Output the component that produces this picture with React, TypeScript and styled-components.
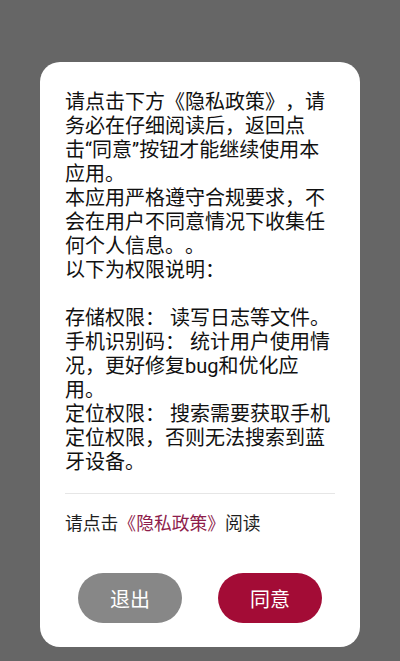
import React from "react";
import styled, { createGlobalStyle } from "styled-components";

const Global = createGlobalStyle`
  html, body { margin: 0; padding: 0; background: #666666; }
  body { font-family: Roboto, "Noto Sans CJK SC", sans-serif; }
`;

const Screen = styled.div`
  width: 400px;
  height: 661px;
  background: #666666;
  display: flex;
  justify-content: center;
  align-items: flex-start;
  padding-top: 62px;
  box-sizing: border-box;
`;

const Card = styled.div`
  width: 320px;
  height: 585px;
  background: #ffffff;
  border-radius: 20px;
  padding: 28px 25px 24px;
  box-sizing: border-box;
  display: flex;
  flex-direction: column;
  text-spacing-trim: space-all;
`;

const Body = styled.div`
  font-size: 20px;
  line-height: 24px;
  color: #111111;
  white-space: pre-wrap;
  text-spacing-trim: space-all;
`;

const Divider = styled.div`
  height: 1px;
  background: #e6e6e6;
  margin-top: 19px;
`;

const Footer = styled.div`
  margin-top: 18px;
  font-size: 17.8px;
  line-height: 24px;
  color: #1e1e1e;
  text-spacing-trim: space-all;
`;

const Link = styled.span`
  color: #8e1d4b;
`;

const Actions = styled.div`
  margin-top: 37px;
  display: flex;
  justify-content: space-between;
  padding: 0 13px;
`;

const Button = styled.button<{ $primary?: boolean }>`
  width: 104px;
  height: 50px;
  border: none;
  border-radius: 25px;
  background: ${(p) => (p.$primary ? "#a30c36" : "#878787")};
  color: #ffffff;
  font-family: Roboto, "Noto Sans CJK SC", sans-serif;
  font-size: 20px;
  padding: 0;
`;

const text = `请点击下方《隐私政策》，请务必在仔细阅读后，返回点击\u2060“\u2060同意”按钮才能继续使用本应用。
本应用严格遵守合规要求，不会在用户不同意情况下收集任何个人信息。。
以下为权限说明：

存储权限： 读写日志等文件。
手机识别码： 统计用户使用情况，更好修复bug和优化应用。
定位权限： 搜索需要获取手机定位权限，否则无法搜索到蓝牙设备。`;

export default function App() {
  return (
    <>
      <Global />
      <Screen lang="zh-CN">
        <Card>
          <Body>{text}</Body>
          <Divider />
          <Footer>
            请点击<Link>《隐私政策》</Link>阅读
          </Footer>
          <Actions>
            <Button>退出</Button>
            <Button $primary>同意</Button>
          </Actions>
        </Card>
      </Screen>
    </>
  );
}
